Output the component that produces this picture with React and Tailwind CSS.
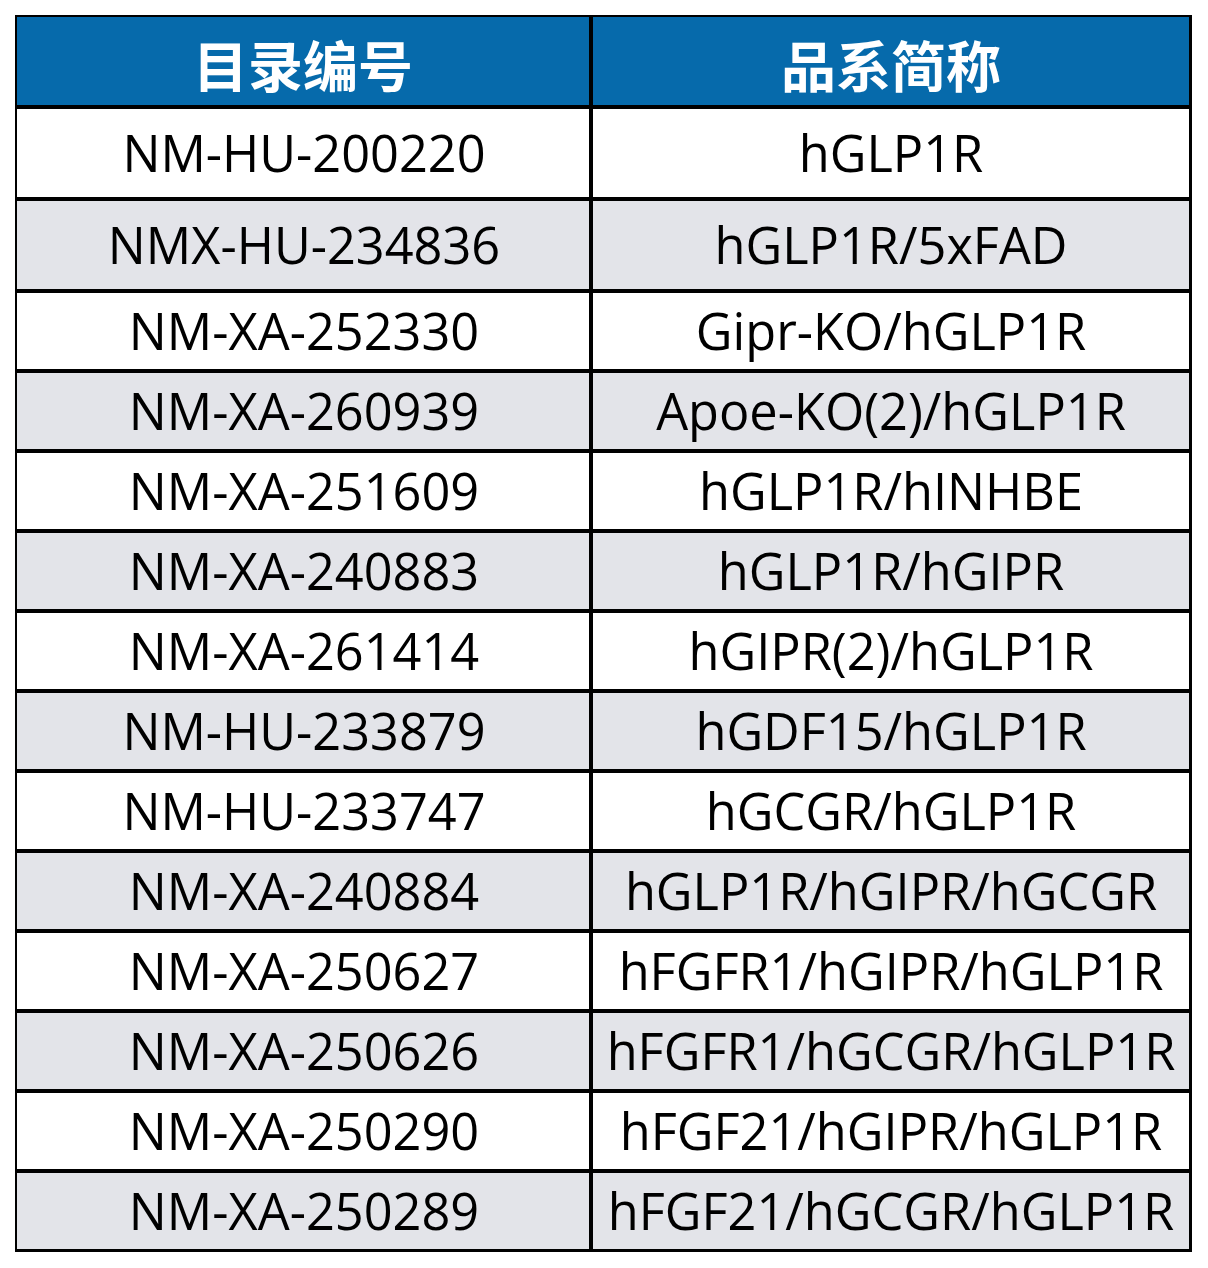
import React from 'react';

const rows = [
    ['NM-HU-200220', 'hGLP1R'],
    ['NMX-HU-234836', 'hGLP1R/5xFAD'],
    ['NM-XA-252330', 'Gipr-KO/hGLP1R'],
    ['NM-XA-260939', 'Apoe-KO(2)/hGLP1R'],
    ['NM-XA-251609', 'hGLP1R/hINHBE'],
    ['NM-XA-240883', 'hGLP1R/hGIPR'],
    ['NM-XA-261414', 'hGIPR(2)/hGLP1R'],
    ['NM-HU-233879', 'hGDF15/hGLP1R'],
    ['NM-HU-233747', 'hGCGR/hGLP1R'],
    ['NM-XA-240884', 'hGLP1R/hGIPR/hGCGR'],
    ['NM-XA-250627', 'hFGFR1/hGIPR/hGLP1R'],
    ['NM-XA-250626', 'hFGFR1/hGCGR/hGLP1R'],
    ['NM-XA-250290', 'hFGF21/hGIPR/hGLP1R'],
    ['NM-XA-250289', 'hFGF21/hGCGR/hGLP1R'],
];

export default function App() {
    return (
        <div className="w-[1208px] h-[1268px] bg-white pt-[15px] pl-[15px]">
            <div className="w-[1177px] border-black border-l-2 border-t-2 border-r-[3px] border-b-[3px] font-['Open_Sans','Noto_Sans',sans-serif] text-black">
                {/* header */}
                <div className="flex h-[88px] bg-[#066aab] text-white font-bold text-[55px] font-['Noto_Sans_CJK_SC',sans-serif]">
                    <div className="w-[576px] border-r-4 border-black flex items-center justify-center pt-[4px]">目录编号</div>
                    <div className="flex-1 flex items-center justify-center pt-[4px]">品系简称</div>
                </div>

                {rows.map(([code, name], i) => (
                    <div
                        key={code}
                        className={
                            'flex border-t-4 border-black text-[50.5px] leading-none ' +
                            (i < 2 ? 'h-[92px] ' : 'h-[80px] ') +
                            (i % 2 === 1 ? 'bg-[#e3e4e9]' : 'bg-white')
                        }
                    >
                        <div className="w-[576px] border-r-4 border-black flex items-center justify-center pl-[2px]">{code}</div>
                        <div className="flex-1 flex items-center justify-center whitespace-nowrap">{name}</div>
                    </div>
                ))}
            </div>
        </div>
    );
}
